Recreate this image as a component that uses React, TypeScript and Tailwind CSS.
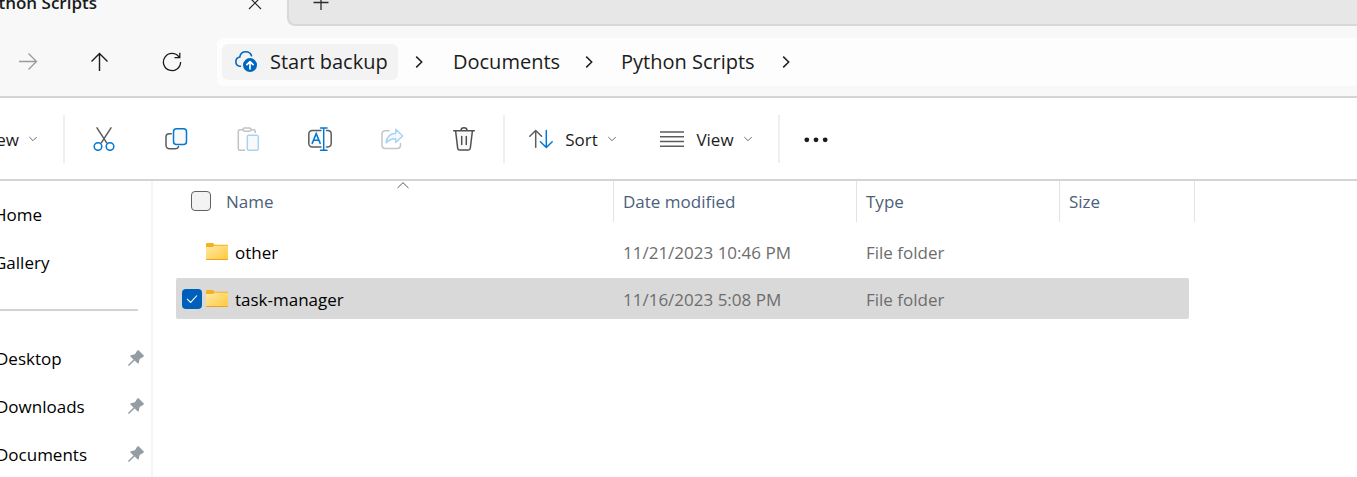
import React from "react";

const CutIcon = () => (
  <svg width="24" height="24" viewBox="0 0 24 24" fill="none" strokeWidth="1.5" strokeLinecap="round" aria-hidden="true">
    <path d="M5 .8 14.7 15.8M19 .8 9.3 15.8" stroke="#5c5c5c" />
    <circle cx="6" cy="19.5" r="3.8" stroke="#0078d4" />
    <circle cx="18" cy="19.5" r="3.8" stroke="#0078d4" />
  </svg>
);

const CopyIcon = () => (
  <svg width="24" height="24" viewBox="0 0 24 24" fill="none" strokeWidth="1.5" strokeLinecap="round" aria-hidden="true">
    <path d="M7.3 6.7H5.2A3.2 3.2 0 0 0 2 9.9v8.4a3.5 3.5 0 0 0 3.5 3.5h5.8c1.7 0 2.8-.8 3.1-2.2" stroke="#5c5c5c" />
    <rect x="9.5" y="1.7" width="13" height="15.8" rx="3" stroke="#0078d4" fill="#f9f9f9" />
  </svg>
);

const PasteIcon = () => (
  <svg width="24" height="24" viewBox="0 0 24 24" fill="none" strokeWidth="1.5" strokeLinecap="round" aria-hidden="true">
    <path d="M6.5 2.7H4A1.7 1.7 0 0 0 2.3 4.4v17.2A1.7 1.7 0 0 0 4 23.3h4.5M15.5 2.7h2A1.7 1.7 0 0 1 19.2 4.4v1" stroke="#c2c2c2" />
    <rect x="7" y=".9" width="8" height="3.4" rx="1.7" stroke="#c2c2c2" />
    <rect x="11.3" y="8.3" width="11" height="15" rx="1.6" stroke="#a9d3f2" fill="#f9f9f9" />
  </svg>
);

const RenameIcon = () => (
  <svg width="24" height="24" viewBox="0 0 24 24" fill="none" strokeWidth="1.5" strokeLinecap="round" aria-hidden="true">
    <path d="M13 3.5H4.2A3.4 3.4 0 0 0 .8 6.9v9.7A3.4 3.4 0 0 0 4.2 20H13" stroke="#5c5c5c" fill="#f7f7f7" />
    <path d="M18.5 3.5h1.2a3.5 3.5 0 0 1 3.5 3.4v9.7a3.5 3.5 0 0 1-3.5 3.4h-1.2" stroke="#5c5c5c" />
    <path d="M15.7 1v22M12.5.9h6.5M12.5 23.2h6.5" stroke="#0078d4" />
    <path d="M4.2 16.4 8.2 6.6l4 9.8M5.6 13.3h5.2" stroke="#0078d4" />
  </svg>
);

const ShareIcon = () => (
  <svg width="24" height="24" viewBox="0 0 24 24" fill="none" strokeWidth="1.5" strokeLinecap="round" strokeLinejoin="round" aria-hidden="true">
    <path d="M9 3.7H5.2A3.2 3.2 0 0 0 2 6.9v11.4a3.2 3.2 0 0 0 3.2 3.2h12.1a3.2 3.2 0 0 0 3.2-3.2v-1.8" stroke="#c6c6c6" />
    <path d="M15.8 2.3v3.9C10.3 6.5 6.7 9.5 6.2 15.9c2.5-3.1 5.5-4.2 9.6-4.2v3.8L22.6 9z" stroke="#a9d3f2" fill="#f3f9fd" />
  </svg>
);

const DeleteIcon = () => (
  <svg width="24" height="24" viewBox="0 0 24 24" fill="none" stroke="#505050" strokeWidth="1.5" strokeLinecap="round" aria-hidden="true">
    <path d="M3.6 4 5.7 21.3a2 2 0 0 0 2 1.8h8.6a2 2 0 0 0 2-1.8L20.4 4" fill="#f9f9f9" />
    <path d="M1.7 3.7h20.6M9 3.5a3 2.7 0 0 1 6 0M9.7 9.5v8M14.3 9.5v8" />
  </svg>
);

const SortIcon = () => (
  <svg width="24" height="24" viewBox="0 0 24 24" fill="none" strokeWidth="1.5" strokeLinecap="round" strokeLinejoin="round" aria-hidden="true">
    <path d="M6.7 20.3V3.5M.8 9.3l5.9-5.8 5.9 5.8" stroke="#5c5c5c" />
    <path d="M17.3 3.5v17M11.4 14.7l5.9 5.8 5.9-5.8" stroke="#0078d4" />
  </svg>
);

const ViewIcon = () => (
  <svg width="24" height="24" viewBox="0 0 24 24" fill="none" stroke="#5c5c5c" strokeWidth="1.5" aria-hidden="true">
    <path d="M0 4.9h24M0 9.7h24M0 14.5h24M0 19.2h24" />
  </svg>
);

const MoreIcon = () => (
  <svg width="24" height="24" viewBox="0 0 24 24" fill="#1b1b1b" aria-hidden="true">
    <circle cx="2.8" cy="12.8" r="2.4" />
    <circle cx="12" cy="12.8" r="2.4" />
    <circle cx="21.2" cy="12.8" r="2.4" />
  </svg>
);

const ChevronDown = () => (
  <svg className="shrink-0" width="8" height="8" viewBox="0 0 8 8" fill="none" stroke="#6b6b6b" aria-hidden="true">
    <path d="M.3 2 4 5.7 7.7 2" />
  </svg>
);

const ChevronRight = () => (
  <svg width="8" height="12" viewBox="0 0 8 12" fill="none" stroke="#1f1f1f" strokeWidth="1.5" aria-hidden="true">
    <path d="M1.2.6 6.7 6l-5.5 5.4" />
  </svg>
);

const CloudUploadIcon = () => (
  <svg width="24" height="24" viewBox="0 0 24 24" fill="none" aria-hidden="true">
    <path d="M6.5 16.3H6a4.7 4.7 0 0 1-.2-9.3C6.3 3.7 8.8 1.7 11.8 1.7c2.7 0 4.9 1.5 5.7 4" stroke="#0067c0" strokeWidth="1.6" strokeLinecap="round" />
    <circle cx="16" cy="15.1" r="7" fill="#0067c0" />
    <path d="M16 18.8v-7M12.9 14.7 16 11.6l3.1 3.1" stroke="#fff" strokeWidth="1.7" strokeLinecap="round" strokeLinejoin="round" />
  </svg>
);

const FolderIcon = () => (
  <svg className="block shrink-0" width="22" height="18" viewBox="0 0 22 18" aria-hidden="true">
    <defs>
      <linearGradient id="folder-front" x1="0" y1="0" x2="1" y2="1">
        <stop offset="0" stopColor="#ffe9a6" />
        <stop offset="1" stopColor="#ffc83a" />
      </linearGradient>
    </defs>
    <path d="M0 1Q0 0 1 0h5.6q.6 0 1 .6l.9 1.2H21q1 0 1 1V8H0z" fill="#f5b01e" />
    <path d="M0 4h6.5q.5 0 .9-.4l.8-.8H22v13.200q0 1-1 1H1q-1 0-1-1z" fill="url(#folder-front)" />
    <path d="M0 15.900h22v.2q0 .9-1 .9H1q-1 0-1-.9z" fill="#eda41c" />
  </svg>
);

const PinIcon = () => (
  <svg className="mb-0.5" width="16" height="16" viewBox="0 0 16 16" fill="#949da4" aria-hidden="true">
    <path d="M9.3.5q.8-.7 1.600.1l4.600 4.600q.8.8-.1 1.500L11.700 8.900l-1 4.100q-.4 1-1.200.2L6.600 10.500 1.200 15.800H.2v-1L5.500 9.400 2.500 6.500q-.7-.8.3-1.200l4.100-1z" />
  </svg>
);

const CheckMark = () => (
  <svg width="12" height="10" viewBox="0 0 12 10" fill="none" stroke="#fff" strokeWidth="1.1" aria-hidden="true">
    <path d="M1 4.8 4.6 8.4 11 1.5" />
  </svg>
);

const tools = [
  { label: "Cut", Icon: CutIcon },
  { label: "Copy", Icon: CopyIcon },
  { label: "Paste", Icon: PasteIcon },
  { label: "Rename", Icon: RenameIcon },
  { label: "Share", Icon: ShareIcon },
  { label: "Delete", Icon: DeleteIcon },
];

const files = [
  { name: "other", date: "11/21/2023 10:46 PM", type: "File folder", selected: false },
  { name: "task-manager", date: "11/16/2023 5:08 PM", type: "File folder", selected: true },
];

function TabStrip() {
  return (
    <div className="flex h-[26px] shrink-0 bg-[#f8f8f8]">
      <div className="flex w-[287px] shrink-0">
        <div className="-mt-[9px] flex h-6 w-[97px] justify-end whitespace-nowrap text-[17px] leading-6 font-semibold">
          Python Scripts
        </div>
        <button aria-label="Close tab" className="-mt-[9px] ml-auto flex h-6 w-[64px] items-center justify-center">
          <svg width="14" height="14" viewBox="0 0 14 14" stroke="#2b2b2b" strokeWidth="1.2" aria-hidden="true">
            <path d="M1 1l12 12M13 1 1 13" />
          </svg>
        </button>
      </div>
      <div className="flex flex-1 rounded-bl-lg border-b-2 border-l-2 border-[#d8d8d8] bg-[#e7e7e7]">
        <button aria-label="New tab" className="-mt-[9px] flex h-6 w-16 items-center justify-center">
          <svg width="16" height="16" viewBox="0 0 16 16" stroke="#2b2b2b" strokeWidth="1.3" aria-hidden="true">
            <path d="M8 0v15M.5 7.5h15" />
          </svg>
        </button>
      </div>
    </div>
  );
}

function NavigationBar() {
  return (
    <nav className="flex h-[72px] shrink-0 items-center border-b-2 border-[#d4d4d4] bg-[#f8f8f8] pt-0.5">
      <button aria-label="Forward" disabled className="flex h-12 w-14 items-center justify-center">
        <svg width="20" height="20" viewBox="0 0 20 20" fill="none" stroke="#9a9a9a" strokeWidth="1.3" aria-hidden="true">
          <path d="M1 9.5h17.500M10.500 1.500l8 8-8 8" />
        </svg>
      </button>
      <button aria-label="Up" className="ml-4 flex h-12 w-14 items-center justify-center">
        <svg width="20" height="20" viewBox="0 0 20 20" fill="none" stroke="#1b1b1b" strokeWidth="1.4" aria-hidden="true">
          <path d="M9.5 19V1.500M1.500 9.500l8-8 8 8" />
        </svg>
      </button>
      <button aria-label="Refresh" className="ml-4 flex h-12 w-14 items-center justify-center">
        <svg width="20" height="20" viewBox="0 0 20 20" fill="none" stroke="#1b1b1b" strokeWidth="1.3" aria-hidden="true">
          <path d="M18.600 10A8.600 8.600 0 1 1 16.900 4.900M17.800.8v4.900H12.500" />
        </svg>
      </button>
      <div className="ml-[17px] flex h-12 flex-1 items-center rounded-l-md bg-[#fdfdfd] pl-[5px] text-[20px] leading-6">
        <button className="flex h-9 w-44 items-center gap-3 rounded-md bg-[#f3f3f3] pl-3 whitespace-nowrap">
          <CloudUploadIcon />
          Start backup
        </button>
        <span className="ml-[17px]"><ChevronRight /></span>
        <button className="ml-[30px] w-[106px] text-left whitespace-nowrap">Documents</button>
        <span className="ml-[26px]"><ChevronRight /></span>
        <button className="ml-[28px] w-[133px] text-left whitespace-nowrap">Python Scripts</button>
        <span className="ml-[28px]"><ChevronRight /></span>
      </div>
    </nav>
  );
}

const Separator = () => <span className="h-12 w-0.5 shrink-0 bg-[#efefef]" />;

function Toolbar() {
  return (
    <div role="toolbar" className="flex h-[83px] shrink-0 items-center border-b-2 border-[#d4d4d4] bg-white text-[17px] leading-6">
      <div className="flex w-[63px] shrink-0">
        <button className="flex w-[37px] items-center justify-end gap-[10px]">
          <span className="pt-0.5">New</span>
          <ChevronDown />
        </button>
      </div>
      <Separator />
      <div className="flex w-[438px] shrink-0 pl-[3px]">
        {tools.map(({ label, Icon }) => (
          <button key={label} aria-label={label} className="flex h-12 w-[72px] items-center justify-center">
            <Icon />
          </button>
        ))}
      </div>
      <Separator />
      <div className="flex w-[273px] shrink-0 pl-6">
        <button className="flex h-12 w-[131px] items-center">
          <SortIcon />
          <span className="ml-3 w-[33px] pt-0.5">Sort</span>
          <span className="ml-[10px]"><ChevronDown /></span>
        </button>
        <button className="flex h-12 items-center">
          <ViewIcon />
          <span className="ml-3 w-[38px] pt-0.5">View</span>
          <span className="ml-[10px]"><ChevronDown /></span>
        </button>
      </div>
      <Separator />
      <button aria-label="See more" className="ml-3 flex h-12 w-12 items-center justify-center">
        <MoreIcon />
      </button>
    </div>
  );
}

function Sidebar() {
  return (
    <aside className="w-[153px] shrink-0 border-r-2 border-[#f6f6f6] pt-[10px] text-[17px] leading-6 text-black">
      {["Home", "Gallery"].map((label) => (
        <a key={label} href="#" className="-ml-1.5 flex h-12 items-center">
          {label}
        </a>
      ))}
      <div className="flex h-12 items-center pr-[13px] pb-0.5">
        <hr className="w-full border-t-2 border-[#d2d2d2]" />
      </div>
      {["Desktop", "Downloads", "Documents"].map((label) => (
        <a key={label} href="#" className="-ml-1 flex h-12 items-center justify-between pr-[7px]">
          {label}
          <PinIcon />
        </a>
      ))}
    </aside>
  );
}

const headCell = "flex h-[41px] items-center border-r border-[#e3e3e3]";

function FileTable() {
  return (
    <table className="w-[1019px] table-fixed border-collapse self-start text-left text-[17px] leading-6">
      <colgroup>
        <col className="w-[438px]" />
        <col className="w-[243px]" />
        <col className="w-[203px]" />
        <col className="w-[135px]" />
      </colgroup>
      <thead className="text-[#4c607a]">
        <tr>
          <th className="p-0 pb-[3px] font-normal">
            <div className={`relative pl-[15px] ${headCell}`}>
              <input
                type="checkbox"
                aria-label="Select all"
                className="mb-0.5 h-5 w-5 appearance-none rounded-[4px] border border-[#616161] bg-[#f3f3f3]"
              />
              <span className="ml-[15px] pt-px">Name</span>
              <svg className="absolute top-0 left-[221px]" width="12" height="8" viewBox="0 0 12 8" fill="none" stroke="#5c5c5c" aria-hidden="true">
                <path d="M.5 7 6 1.700 11.500 7" />
              </svg>
            </div>
          </th>
          {["Date modified", "Type", "Size"].map((label) => (
            <th key={label} className="p-0 pb-[3px] font-normal">
              <div className={`pt-px pl-[9px] ${headCell}`}>{label}</div>
            </th>
          ))}
        </tr>
      </thead>
      <tbody className="text-[#6d6d6d]">
        {files.map((file) => {
          const fill = file.selected ? "bg-[#d9d9d9]" : "";
          return (
            <tr key={file.name}>
              <td className="p-0 pt-1.5">
                <div className={`flex h-[41px] items-center rounded-l-xs pl-1.5 text-black ${fill}`}>
                  <label className="relative flex h-5 w-5 items-center justify-center">
                    <input
                      type="checkbox"
                      defaultChecked={file.selected}
                      aria-label={`Select ${file.name}`}
                      className="absolute inset-0 appearance-none rounded-[4px] checked:bg-[#005fb8]"
                    />
                    {file.selected && <span className="relative"><CheckMark /></span>}
                  </label>
                  <span className="ml-1"><FolderIcon /></span>
                  <span className="ml-[7px] pt-[3px]">{file.name}</span>
                </div>
              </td>
              <td className="p-0 pt-1.5">
                <div className={`flex h-[41px] items-center pt-[3px] pl-[9px] ${fill}`}>{file.date}</div>
              </td>
              <td className="p-0 pt-1.5">
                <div className={`flex h-[41px] items-center pt-[3px] pl-[9px] ${fill}`}>{file.type}</div>
              </td>
              <td className="p-0 pt-1.5">
                <div className={`mr-1.5 h-[41px] rounded-r-xs ${fill}`} />
              </td>
            </tr>
          );
        })}
      </tbody>
    </table>
  );
}

export default function App() {
  return (
    <div className="flex h-screen flex-col overflow-hidden bg-white font-['Open_Sans','Noto_Sans',sans-serif] text-[#1b1b1b]">
      <TabStrip />
      <NavigationBar />
      <Toolbar />
      <div className="flex min-h-0 flex-1">
        <Sidebar />
        <main className="flex flex-1 pl-[23px]">
          <FileTable />
        </main>
      </div>
    </div>
  );
}
